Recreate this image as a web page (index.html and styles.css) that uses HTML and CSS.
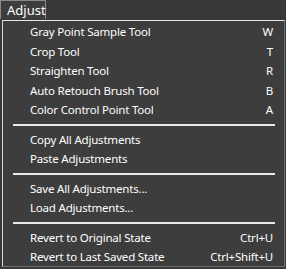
FILE: index.html
```html
<!DOCTYPE html>
<html>
<head>
<meta charset="utf-8">
<link rel="stylesheet" href="styles.css">
</head>
<body>
<div class="tab">Adjust</div>
<div class="menu">
  <div class="item"><span>Gray Point Sample Tool</span><span class="key">W</span></div>
  <div class="item"><span>Crop Tool</span><span class="key">T</span></div>
  <div class="item"><span>Straighten Tool</span><span class="key">R</span></div>
  <div class="item"><span>Auto Retouch Brush Tool</span><span class="key">B</span></div>
  <div class="item"><span>Color Control Point Tool</span><span class="key">A</span></div>
  <div class="sep"></div>
  <div class="item"><span>Copy All Adjustments</span></div>
  <div class="item"><span>Paste Adjustments</span></div>
  <div class="sep"></div>
  <div class="item"><span>Save All Adjustments...</span></div>
  <div class="item"><span>Load Adjustments...</span></div>
  <div class="sep"></div>
  <div class="item"><span>Revert to Original State</span><span class="key">Ctrl+U</span></div>
  <div class="item"><span>Revert to Last Saved State</span><span class="key">Ctrl+Shift+U</span></div>
</div>
</body>
</html>
```
FILE: styles.css
```css
html, body {
  margin: 0;
  padding: 0;
  background: #383838;
  font-family: "Noto Sans", "Open Sans", sans-serif;
  font-size: 11.5px;
  color: #ffffff;
}
.tab {
  box-sizing: border-box;
  width: 46px;
  height: 19px;
  border: 1px solid #8a8a8a;
  border-bottom: none;
  background: #3d3d3d;
  padding-left: 6px;
  line-height: 18px;
  font-size: 13px;
  margin-bottom: 1px;
}
.menu {
  box-sizing: border-box;
  margin-left: 2px;
  width: 283px;
  height: 247px;
  background: #3d3d3d;
  border-top: 1px solid #e6e6e6;
  border-left: 1px solid #d8d8d8;
  border-right: 1px solid #6e6e6e;
  border-bottom: 1px solid #6e6e6e;
  padding-top: 1px;
}
.item {
  display: flex;
  justify-content: space-between;
  align-items: center;
  height: 19.5px;
  padding-left: 27px;
  padding-right: 11px;
  white-space: nowrap;
  letter-spacing: -0.2px;
}
.sep {
  height: 2px;
  margin: 4px 9px 4px 10px;
  background: #e8e8e8;
}
```
